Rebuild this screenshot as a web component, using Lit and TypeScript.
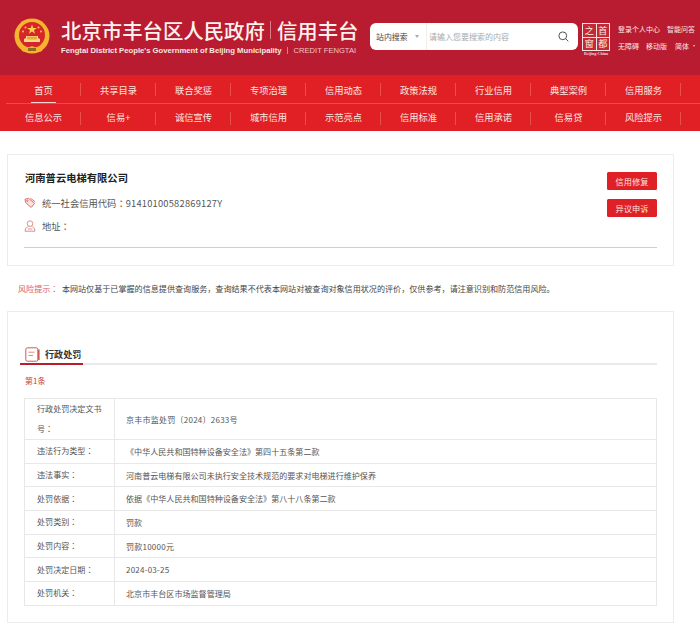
import {LitElement, html, css, svg} from 'lit';
import {customElement} from 'lit/decorators.js';

const NAV_TOP = ['首页', '共享目录', '联合奖惩', '专项治理', '信用动态', '政策法规', '行业信用', '典型案例', '信用服务'];
const NAV_BOTTOM = ['信息公示', '信易+', '诚信宣传', '城市信用', '示范亮点', '信用标准', '信用承诺', '信易贷', '风险提示'];

// key lines, value, row classes
const ROWS: [string[], string, string][] = [
    [['行政处罚决定文书', '号'], '京丰市监处罚〔2024〕2633号', 'tall num'],
    [['违法行为类型'], '《中华人民共和国特种设备安全法》第四十五条第二款', ''],
    [['违法事实'], '河南普云电梯有限公司未执行安全技术规范的要求对电梯进行维护保养', ''],
    [['处罚依据'], '依据《中华人民共和国特种设备安全法》第八十八条第二款', ''],
    [['处罚类别'], '罚款', ''],
    [['处罚内容'], '罚款10000元', 'num'],
    [['处罚决定日期'], '2024-03-25', 'num'],
    [['处罚机关'], '北京市丰台区市场监督管理局', ''],
];

const emblem = svg`
    <circle cx="18" cy="18" r="17.5" fill="#f4b52e"/>
    <circle cx="18" cy="17" r="13" fill="#d6262a"/>
    <path d="M18 6.5l1.3 3.5h3.6l-2.9 2.2 1.1 3.5-3.1-2.1-3.1 2.1 1.1-3.5-2.9-2.2h3.6z" fill="#f8cf4a"/>
    <circle cx="11.5" cy="9.5" r="1" fill="#f8cf4a"/>
    <circle cx="24.5" cy="9.5" r="1" fill="#f8cf4a"/>
    <circle cx="9" cy="13.5" r="1" fill="#f8cf4a"/>
    <circle cx="27" cy="13.5" r="1" fill="#f8cf4a"/>
    <path d="M10 24v-3l2-1v-2h12v2l2 1v3z" fill="#f8d98a"/>
    <rect x="13" y="18.5" width="10" height="3" fill="#e8a93a"/>
    <path d="M6 28c4 3 8 2 12 0 4 2 8 3 12 0l-2 5c-3 2-7 1-10-1-3 2-7 3-10 1z" fill="#f4b52e"/>
    <path d="M14 30h8v3h-8z" fill="#8f6a1c"/>
`;

@customElement('app-root')
class AppRoot extends LitElement {
    renderNavRow(items: string[], extra: string) {
        return html`
            <div class="nav-row ${extra}">
                ${items.map((t, i) => html`
                    <a class="nav-item ${extra === 'top' && i === 0 ? 'active' : ''}">${t}</a>
                `)}
            </div>
        `;
    }

    render() {
        return html`
            <header class="header">
                <svg class="emblem" width="36" height="36" viewBox="0 0 36 36">${emblem}</svg>
                <div class="brand">
                    <div class="brand-cn">
                        <span>北京市丰台区人民政府</span>
                        <i class="brand-bar"></i>
                        <span>信用丰台</span>
                    </div>
                    <div class="brand-en">
                        <span>Fengtai District People's Government of Beijing Municipality</span>
                        <i class="brand-bar small"></i>
                        <span class="credit">CREDIT FENGTAI</span>
                    </div>
                </div>
                <div class="search">
                    <span class="scope">站内搜索</span>
                    <i class="caret"></i>
                    <span class="placeholder">请输入您要搜索的内容</span>
                    <svg class="lens" width="11" height="11" viewBox="0 0 11 11" fill="none" stroke="#555" stroke-width="1">
                        <circle cx="4.8" cy="4.8" r="3.9"/>
                        <path d="M7.7 7.7l2.6 2.6"/>
                    </svg>
                </div>
                <div class="capital">
                    <div class="capital-grid">
                        <span>之</span><span>首</span><span>窗</span><span>都</span>
                    </div>
                    <div class="capital-en">Beijing·China</div>
                </div>
                <div class="links">
                    <div class="links-row"><span>登录个人中心</span><span>智能问答</span></div>
                    <div class="links-row"><span>无障碍</span><span>移动版</span><span class="lang">简体</span><i class="lang-caret"></i></div>
                </div>
            </header>

            <nav class="nav">
                ${this.renderNavRow(NAV_TOP, 'top')}
                ${this.renderNavRow(NAV_BOTTOM, 'bottom')}
            </nav>

            <main class="page">
                <section class="card company">
                    <div class="company-main">
                        <div class="company-info">
                            <h1>河南普云电梯有限公司</h1>
                            <div class="meta code">
                                <svg width="12" height="12" viewBox="0 0 12 12" fill="#fbe3e0" stroke="#dc6f69" stroke-width="1">
                                    <path d="M1 2.2l3.6-.8 6 5-3.4 4-5.6-4.8z"/>
                                    <circle cx="3.4" cy="3.8" r=".7" fill="#fff"/>
                                    <path d="M6.4 1.2l4.8 3.6" fill="none"/>
                                </svg>
                                <span>统一社会信用代码<span class="colon">：</span><span class="credit-no">91410100582869127Y</span></span>
                            </div>
                            <div class="meta addr">
                                <svg width="12" height="12" viewBox="0 0 12 12" fill="none" stroke="#e08f8a" stroke-width="1">
                                    <circle cx="6" cy="3.6" r="2.8"/>
                                    <path d="M4.2 6.2C3.4 7.4 2.4 7.8 1.6 8.4L1 11.2h10l-.6-2.8c-.8-.6-1.8-1-2.6-2.2"/>
                                    <path d="M3.8 9h4.4"/>
                                </svg>
                                <span>地址<span class="colon">：</span></span>
                            </div>
                        </div>
                        <div class="actions">
                            <button>信用修复</button>
                            <button>异议申诉</button>
                        </div>
                    </div>
                    <div class="company-rule"></div>
                </section>

                <p class="risk"><span class="risk-label">风险提示<span class="colon">：</span></span>本网站仅基于已掌握的信息提供查询服务，查询结果不代表本网站对被查询对象信用状况的评价，仅供参考，请注意识别和防范信用风险。</p>

                <section class="card records">
                    <div class="section-head">
                        <div class="section-title">
                            <svg width="15" height="15" viewBox="0 0 15 15" fill="none" stroke="#cf5a52" stroke-width="1">
                                <rect x=".8" y=".8" width="12" height="13.4" rx="1.5"/>
                                <path d="M13.8 2.5v10.5" stroke-width="1.6"/>
                                <path d="M3.5 5.2h6M3.5 8.5h4.5" stroke="#de8a84"/>
                            </svg>
                            <span>行政处罚</span>
                        </div>
                    </div>
                    <div class="item-no">第1条</div>
                    <table>
                        ${ROWS.map(([lines, v, cls]) => html`
                            <tr class=${cls}>
                                <td class="key">
                                    ${lines.slice(0, -1).map(l => html`<div>${l}</div>`)}
                                    <div>${lines[lines.length - 1]}<span class="colon">：</span></div>
                                </td>
                                <td class="val">${v}</td>
                            </tr>
                        `)}
                    </table>
                </section>
            </main>
        `;
    }

    static styles = css`
      :host {
        display: block;
        width: 700px;
        height: 623px;
        overflow: hidden;
        background: #fff;
        font-family: "Noto Sans CJK SC", "Noto Sans", sans-serif;
        color: #444;
      }

      /* fullwidth colon sits centred in the reference */
      .colon { font-family: "Noto Sans CJK JP", sans-serif; }

      /* header */
      .header {
        display: flex;
        align-items: flex-start;
        height: 75px;
        box-sizing: border-box;
        background: #b91c30;
        padding: 18px 0 0 14px;
        color: #fff;
      }
      .emblem { flex: none; margin-right: 11px; }
      .brand { width: 309px; flex: none; }
      .brand-cn {
        display: flex;
        align-items: center;
        height: 24px;
        font-size: 20.4px;
        line-height: 24px;
        font-weight: 500;
        color: #fdf1ee;
      }
      .brand-bar {
        display: block;
        width: 1px;
        height: 18px;
        margin: 0 5.5px;
        background: #dc7f88;
      }
      .brand-bar.small { height: 7px; margin: 0 5.5px; }
      .brand-en {
        display: flex;
        align-items: center;
        margin-top: 3px;
        height: 10px;
        font-family: "Liberation Sans", sans-serif;
        font-size: 7.7px;
        font-weight: 700;
        white-space: nowrap;
        color: #fbe6e4;
      }
      .credit { font-weight: 400; font-size: 7.6px; color: #f3c5c7; }

      .search {
        display: flex;
        align-items: center;
        flex: none;
        width: 208px;
        height: 27px;
        margin-top: 5px;
        background: #fff;
        border-radius: 6px;
        font-size: 7.9px;
        box-sizing: border-box;
        padding-left: 6px;
      }
      .scope { color: #444; width: 39px; }
      .caret {
        width: 0;
        height: 0;
        border: 2.5px solid transparent;
        border-top: 3px solid #aaa;
        border-bottom: 0;
        margin-right: 7px;
      }
      .placeholder {
        flex: 1;
        height: 100%;
        line-height: 27px;
        border-left: 1px solid #eee;
        padding-left: 2px;
        font-size: 8px;
        color: #aaa;
      }
      .lens { margin-right: 9px; }

      .capital { flex: none; margin: 5px 0 0 4px; width: 28px; }
      .capital-grid {
        display: grid;
        grid-template-columns: 1fr 1fr;
        gap: 1px;
        width: 28px;
        height: 28px;
        box-sizing: border-box;
        border: 1.5px solid #f7e4e2;
        background: #f7e4e2;
      }
      .capital-grid span {
        display: flex;
        align-items: center;
        justify-content: center;
        font-size: 9px;
        line-height: 1;
        color: #fdeeea;
        background: #c42a36;
      }
      .capital-en {
        margin-left: -2px;
        width: 32px;
        font-family: "Liberation Serif", serif;
        font-size: 4px;
        font-weight: 700;
        line-height: 6px;
        text-align: center;
        white-space: nowrap;
        color: #f3d5d5;
      }

      .links { margin: 2px 0 0 8px; font-size: 7px; white-space: nowrap; color: #fbe8e4; }
      .links-row { display: flex; align-items: center; height: 17px; gap: 7px; }
      .lang { margin-left: 1px; }
      .lang-caret {
        width: 0;
        height: 0;
        margin-left: -3px;
        border: 1.5px solid transparent;
        border-top: 2px solid #f3c5c7;
        border-bottom: 0;
      }

      /* nav */
      .nav {
        height: 56px;
        background: #e02024;
        padding: 0 6px;
        box-sizing: border-box;
      }
      .nav-row { display: flex; }
      .nav-row.top {
        height: 29px;
        box-sizing: border-box;
        border-bottom: 1px solid #ea4a48;
        margin-right: -6px;
      }
      .nav-row.bottom { height: 27px; }
      .nav-item {
        position: relative;
        display: block;
        flex: none;
        width: 75px;
        font-size: 9.3px;
        line-height: 27px;
        text-align: center;
        color: #fde6e0;
      }
      .nav-row.top .nav-item { line-height: 30px; }
      .nav-item::after {
        content: '';
        position: absolute;
        right: 0;
        top: 8px;
        height: 13px;
        width: 1px;
        background: #ea4f4c;
      }
      .nav-item.active::before {
        content: '';
        position: absolute;
        left: 25px;
        right: 25px;
        bottom: 0;
        height: 1px;
        background: #fbd8d3;
      }

      /* content */
      .page { padding: 23px 26px 0 7px; }
      .card {
        border: 1px solid #ececec;
        box-sizing: border-box;
      }
      .company { height: 112px; padding: 0 16px; }
      .company-main { display: flex; justify-content: space-between; height: 92px; }
      h1 {
        margin: 15px 0 0 1px;
        font-size: 10.3px;
        line-height: 15px;
        font-weight: 700;
        color: #222;
      }
      .meta {
        display: flex;
        align-items: center;
        gap: 6px;
        font-size: 9.3px;
        line-height: 14px;
        color: #555;
      }
      .meta.code { margin-top: 11px; }
      .meta.addr { margin-top: 9px; }
      .credit-no { letter-spacing: .22px; }
      .actions {
        display: flex;
        flex-direction: column;
        gap: 9px;
        padding-top: 17px;
      }
      button {
        display: block;
        width: 50px;
        height: 18px;
        padding: 0;
        border: none;
        border-radius: 1.5px;
        background: #e02027;
        color: #fde3df;
        font: inherit;
        font-size: 8.2px;
      }
      .company-rule { height: 1px; background: #cfcfcf; }

      .risk {
        margin: 16px 0 16px 11px;
        font-size: 8.08px;
        line-height: 13px;
        height: 13px;
        white-space: nowrap;
        color: #444;
      }
      .risk-label { color: #d9605c; margin-right: 3.5px; }

      .records { height: 312px; padding: 0 16px; }
      .section-head {
        position: relative;
        height: 53px;
        margin-left: -4px;
        box-sizing: border-box;
        padding-top: 34px;
        border-bottom: 2px solid #eaeaea;
      }
      /* the title's red rule lies over the grey one */
      .section-title {
        position: absolute;
        left: 0;
        bottom: -2px;
        display: flex;
        align-items: center;
        gap: 5px;
        width: 63px;
        height: 19px;
        box-sizing: border-box;
        padding: 0 0 1px 5px;
        border-bottom: 2px solid #b81f2d;
        font-size: 9.1px;
        font-weight: 700;
        color: #333;
        white-space: nowrap;
      }
      .item-no {
        margin: 10px 0 11px 1px;
        font-size: 8px;
        line-height: 12px;
        color: #c2463f;
      }
      table {
        width: 633px;
        border-collapse: collapse;
        table-layout: fixed;
        font-size: 8.07px;
        color: #555;
      }
      tr { height: 23.7px; }
      tr.tall { height: 41px; }
      td {
        border: 1px solid #e8e8e8;
        padding: 0 12px;
      }
      .key { width: 65px; line-height: 20px; }
      .val { padding-left: 11px; }
      tr.num .val { letter-spacing: .2px; }
    `;
}
